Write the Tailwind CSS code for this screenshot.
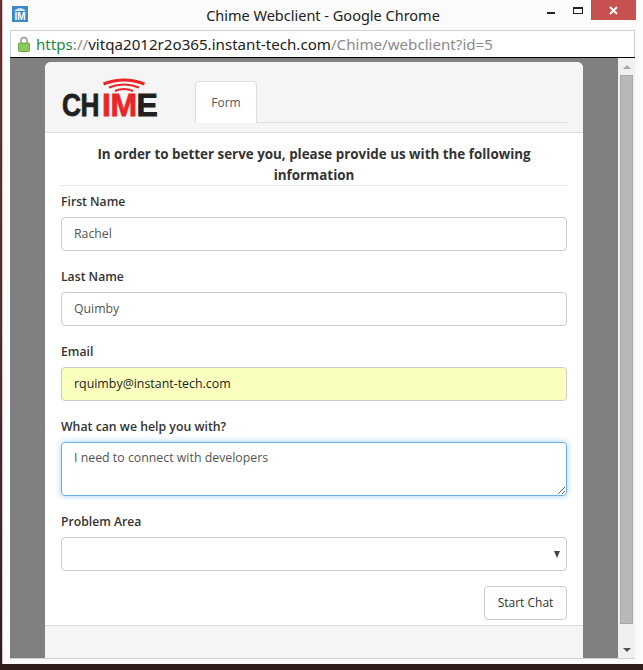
<!DOCTYPE html>
<html lang="en">
<head>
<meta charset="utf-8">
<title>Chime Webclient</title>
<script src="https://cdn.jsdelivr.net/npm/@tailwindcss/browser@4"></script>
</head>
<body class="w-[643px] h-[670px] overflow-hidden bg-[linear-gradient(#6a2f2f,#4a2626_70%,#2e1e1c)] font-['Open_Sans',sans-serif]">
<div class="ml-[2px] w-[641px] h-[664px] bg-[#fbfbfb] flex flex-col border-l border-[#c8c8c8]">
  <div class="h-[30px] shrink-0 flex items-start relative">
    <div class="absolute left-[9px] top-[6px] w-4 h-4 bg-[#3a8cc8] flex flex-col items-center justify-end">
      <svg width="12" height="4" viewBox="0 0 12 4" class="block"><path d="M0 4Q6 -2 12 4Z" fill="#d8eaf6"/></svg>
      <span class="text-white text-[10px] leading-[11px] font-bold font-['Liberation_Sans',sans-serif]">IM</span>
    </div>
    <div class="w-[640px] text-center text-[14.5px] leading-[30px] text-[#222] font-['Noto_Sans',sans-serif]">Chime Webclient - Google Chrome</div>
    <div class="absolute left-[544px] top-[12px] w-2 h-[2px] bg-[#222]"></div>
    <div class="absolute left-[570px] top-[7px] w-[10px] h-[7px] border border-t-2 border-[#222]"></div>
    <div class="absolute left-[588px] top-0 w-[45px] h-5 bg-[#c75050] flex items-center justify-center">
      <svg width="9" height="9" viewBox="0 0 9 9"><path d="M1 1l7 7M8 1l-7 7" stroke="#fff" stroke-width="2"/></svg>
    </div>
  </div>
  <div class="ml-[7px] w-[625px] h-[27px] shrink-0 bg-white border border-[#cfd2d8] border-b-0 flex items-center pl-[7px] gap-[6px]">
    <svg width="12" height="16" viewBox="0 0 12 16" class="shrink-0"><path d="M3 7V4.5a3 3 0 0 1 6 0V7" fill="none" stroke="#9a9a9a" stroke-width="1.6"/><rect x="0.5" y="7" width="11" height="8.5" rx="1" fill="#8bc75a" stroke="#6fa845"/></svg>
    <div class="text-[15.13px] leading-[26px] whitespace-nowrap font-['Noto_Sans',sans-serif]"><span class="text-[#1a8a3c]">https</span><span class="text-[#8a8a8a]">://</span><span class="text-[#222]">vitqa2012r2o365.instant-tech.com</span><span class="text-[#8a8a8a]">/Chime/webclient?id=5</span></div>
  </div>
  <div class="ml-[7px] w-[625px] h-[602px] shrink-0 border-t-[1px] border-black border-b border-b-[#cfcfcf] flex">
    <div class="w-[608px] bg-[#808080] pl-[35px] pt-[4px] overflow-hidden">
      <div class="w-[538px] h-[596px] bg-white rounded-t-[6px] flex flex-col text-[#333]">
        <div class="h-[71px] shrink-0 bg-[#f5f5f5] border-b border-[#ddd] rounded-t-[6px] flex items-start pl-[16px] pr-[16px]">
          <div class="w-[134px] shrink-0 relative">
            <svg width="44" height="14" viewBox="0 0 44 14" class="absolute left-[41px] top-[16px]"><path d="M1.5 6Q22 -2 42.5 6" fill="none" stroke="#e8262a" stroke-width="3"/><path d="M7 9.5Q22 3.5 37 9.5" fill="none" stroke="#e8262a" stroke-width="2.2"/><path d="M13 13Q22 9 31 13" fill="none" stroke="#e8262a" stroke-width="2"/></svg>
            <div class="mt-[25px] ml-px text-[32px] leading-[36px] font-bold tracking-[-0.5px] text-[#231f20] whitespace-nowrap [-webkit-text-stroke:0.8px] font-['Liberation_Sans',sans-serif]"><span class="inline-block w-[40px] origin-left scale-x-[0.82]">CH</span><span class="text-[#e8262a]">IM</span>E</div>
          </div>
          <div class="flex-1 h-[61px] flex items-end border-b border-[#ddd]">
            <div class="w-[62px] h-[42px] bg-white border border-[#ddd] border-b-0 rounded-t-[4px] flex items-center justify-center text-[12px] text-[#555] -mb-px">Form</div>
          </div>
        </div>
        <form class="flex-1 px-[16px] flex flex-col">
          <h1 class="h-[53px] shrink-0 border-b border-[#e6e6e6] text-center font-bold text-[13.4px] leading-[21px] pt-[11px] px-[20px]">In order to better serve you, please provide us with the following information</h1>
          <label class="mt-[8px] font-semibold text-[12.2px] leading-[16px]">First Name</label>
          <input class="mt-[7px] h-[34px] shrink-0 rounded-[4px] border border-[#ccc] px-[12px] pb-[2px] text-[12.3px] text-[#555]" value="Rachel">
          <label class="mt-[18px] font-semibold text-[12.2px] leading-[16px]">Last Name</label>
          <input class="mt-[7px] h-[34px] shrink-0 rounded-[4px] border border-[#ccc] px-[12px] pb-[2px] text-[12.3px] text-[#555]" value="Quimby">
          <label class="mt-[18px] font-semibold text-[12.2px] leading-[16px]">Email</label>
          <input class="mt-[7px] h-[34px] shrink-0 rounded-[4px] border border-[#ccc] bg-[#fbffbd] px-[12px] pb-[2px] text-[12.4px] text-[#222]" value="rquimby@instant-tech.com">
          <label class="mt-[18px] font-semibold text-[12.3px] leading-[16px]">What can we help you with?</label>
          <textarea class="mt-[7px] h-[54px] shrink-0 rounded-[4px] border border-[#66afe9] shadow-[0_0_6px_rgba(102,175,233,0.6)] px-[12px] py-[6px] text-[12.35px] leading-[17px] text-[#555] outline-none">I need to connect with developers</textarea>
          <label class="mt-[18px] font-semibold text-[12.2px] leading-[16px]">Problem Area</label>
          <div class="mt-[7px] h-[34px] shrink-0 relative">
            <select class="w-full h-full appearance-none rounded-[4px] border border-[#ccc] bg-white px-[12px] text-[12px]"></select>
            <div class="absolute right-[7px] top-[14px] w-0 h-0 border-x-[3px] border-x-transparent border-t-[7px] border-t-[#444]"></div>
          </div>
          <div class="mt-[15px] flex justify-end">
            <button type="button" class="w-[83px] h-[34px] bg-white border border-[#ccc] rounded-[4px] text-[12px] text-[#333]">Start Chat</button>
          </div>
        </form>
        <div class="h-[33px] shrink-0 bg-[#f5f5f5] border-t border-[#ddd]"></div>
      </div>
    </div>
    <div class="w-[17px] bg-[#f0f0f0] relative">
      <div class="absolute left-[5px] top-[7px] w-0 h-0 border-x-[4px] border-x-transparent border-b-[4px] border-b-[#a6a6a6]"></div>
      <div class="absolute left-[2px] top-[17px] w-[13px] h-[549px] bg-[#b8b8b8] border border-[#a8a8a8]"></div>
      <div class="absolute left-[5px] top-[590px] w-0 h-0 border-x-[4px] border-x-transparent border-t-[4px] border-t-[#505050]"></div>
    </div>
  </div>
</div>
</body>
</html>
